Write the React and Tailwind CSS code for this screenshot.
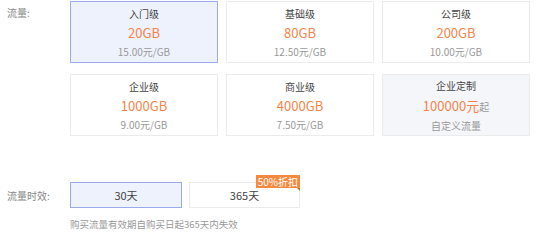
import React from "react";

const plans = [
  { name: "入门级", size: "20GB", price: "15.00元/GB", selected: true },
  { name: "基础级", size: "80GB", price: "12.50元/GB" },
  { name: "公司级", size: "200GB", price: "10.00元/GB" },
  { name: "企业级", size: "1000GB", price: "9.00元/GB" },
  { name: "商业级", size: "4000GB", price: "7.50元/GB" },
];

function Card({ p }) {
  return (
    <div
      className={
        "h-[62px] flex flex-col items-center justify-center border " +
        (p.selected
          ? "bg-[#eef2fd] border-[#9aaaec]"
          : "bg-white border-[#ebebeb]")
      }
    >
      <div className="text-[10px] leading-[19px] text-[#444]">{p.name}</div>
      <div className="text-[13px] leading-[19px] text-[#f5844a]">{p.size}</div>
      <div className="text-[10px] leading-[19px] text-[#999]">{p.price}</div>
    </div>
  );
}

export default function App() {
  return (
    <div
      className="w-[554px] h-[240px] bg-white relative overflow-hidden"
      style={{ fontFamily: '"Noto Sans CJK SC", "Noto Sans", sans-serif' }}
    >
      <div className="flex pt-[1px]">
        <div className="w-[70px] pl-[7px] pt-[4px] text-[10px] text-[#888]">流量:</div>
        <div className="grid grid-cols-[148px_148px_148px] gap-x-[8px] gap-y-[11px]">
          {plans.map((p) => (
            <Card key={p.name} p={p} />
          ))}
          <div className="h-[62px] flex flex-col items-center justify-center border bg-[#f5f6fa] border-[#ebebeb]">
            <div className="text-[10px] leading-[19px] text-[#444]">企业定制</div>
            <div className="leading-[19px] text-[#f5844a]">
              <span className="text-[13px]">100000元</span>
              <span className="text-[10px] text-[#999]">起</span>
            </div>
            <div className="text-[10px] leading-[19px] text-[#999]">自定义流量</div>
          </div>
        </div>
      </div>

      <div className="flex mt-[46px]">
        <div className="w-[70px] pl-[7px] pt-[6px] text-[10px] text-[#888]">流量时效:</div>
        <div className="flex gap-[7px]">
          <div className="w-[112px] h-[26px] flex items-center justify-center border border-[#9aaaec] bg-[#eef2fd] text-[11px] text-[#444]">
            30天
          </div>
          <div className="relative w-[111px] h-[26px] flex items-center justify-center border border-[#ebebeb] bg-white text-[11px] text-[#444]">
            365天
            <div className="absolute right-[-1px] top-[-8px] h-[13px] px-[2px] bg-[#f58a3e] text-white text-[10px] leading-[13px]">
              50%折扣
              <span className="absolute right-0 bottom-[-3px] w-0 h-0 border-l-[3px] border-l-transparent border-t-[3px] border-t-[#c96a2a]" />
            </div>
          </div>
        </div>
      </div>

      <div className="pl-[70px] mt-[9px] text-[9.5px] text-[#999]">购买流量有效期自购买日起365天内失效</div>
    </div>
  );
}
